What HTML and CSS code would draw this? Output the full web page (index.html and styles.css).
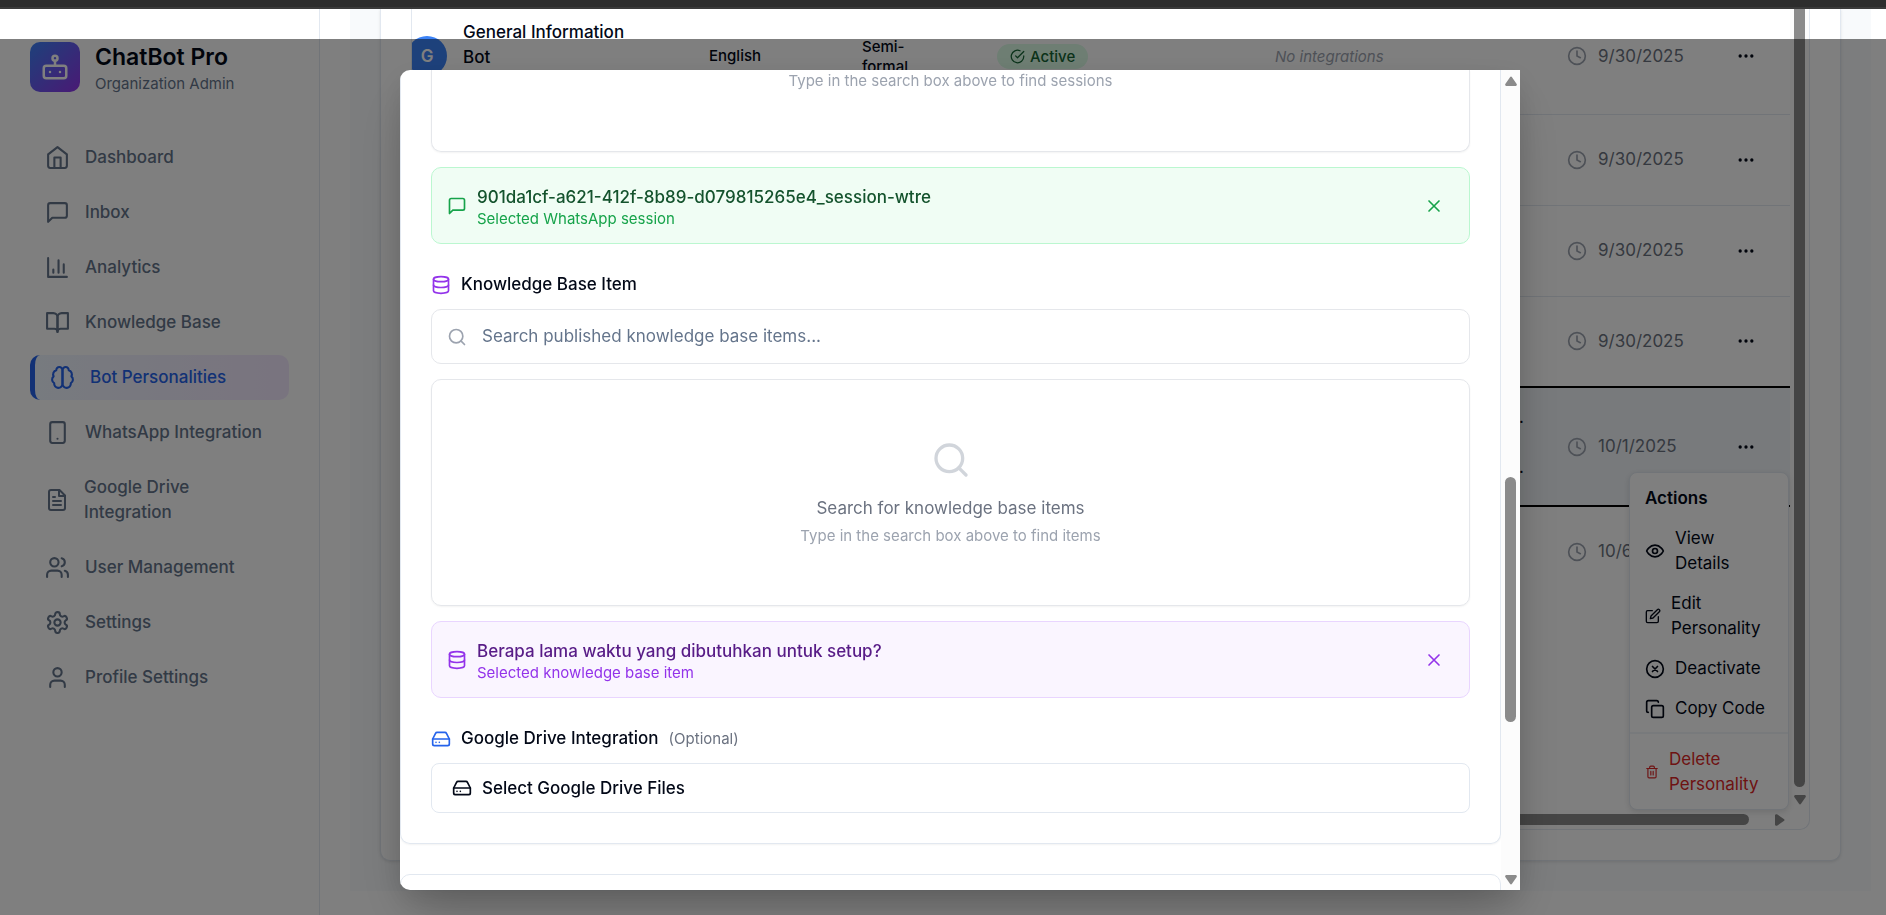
FILE: index.html
```html
<!DOCTYPE html>
<html lang="en">
<head>
<meta charset="utf-8">
<title>ChatBot Pro</title>
<link rel="stylesheet" href="styles.css">
</head>
<body>
<svg class="sprite" aria-hidden="true">
  <symbol id="i-bot" viewBox="0 0 24 24"><rect x="3" y="11" width="18" height="10" rx="2"/><circle cx="12" cy="5" r="2"/><path d="M12 7v4M8 16h.01M16 16h.01"/></symbol>
  <symbol id="i-home" viewBox="0 0 24 24"><path d="m3 9 9-7 9 7v11a2 2 0 0 1-2 2H5a2 2 0 0 1-2-2z"/><path d="M9 22V12h6v10"/></symbol>
  <symbol id="i-msg" viewBox="0 0 24 24"><path d="M21 15a2 2 0 0 1-2 2H7l-4 4V5a2 2 0 0 1 2-2h14a2 2 0 0 1 2 2z"/></symbol>
  <symbol id="i-chart" viewBox="0 0 24 24"><path d="M3 3v18h18M18 17V9M13 17V5M8 17v-3"/></symbol>
  <symbol id="i-book" viewBox="0 0 24 24"><path d="M2 3h6a4 4 0 0 1 4 4v14a3 3 0 0 0-3-3H2z"/><path d="M22 3h-6a4 4 0 0 0-4 4v14a3 3 0 0 1 3-3h7z"/></symbol>
  <symbol id="i-brain" viewBox="0 0 24 24"><path d="M12 5a3 3 0 1 0-5.997.125 4 4 0 0 0-2.526 5.77 4 4 0 0 0 .556 6.588A4 4 0 1 0 12 18Z"/><path d="M12 5a3 3 0 1 1 5.997.125 4 4 0 0 1 2.526 5.77 4 4 0 0 1-.556 6.588A4 4 0 1 1 12 18Z"/></symbol>
  <symbol id="i-phone" viewBox="0 0 24 24"><rect x="5" y="2" width="14" height="20" rx="2"/><path d="M12 18h.01"/></symbol>
  <symbol id="i-file" viewBox="0 0 24 24"><path d="M14.5 2H6a2 2 0 0 0-2 2v16a2 2 0 0 0 2 2h12a2 2 0 0 0 2-2V7.5L14.5 2z"/><path d="M14 2v6h6M16 13H8M16 17H8M10 9H8"/></symbol>
  <symbol id="i-users" viewBox="0 0 24 24"><path d="M16 21v-2a4 4 0 0 0-4-4H6a4 4 0 0 0-4 4v2"/><circle cx="9" cy="7" r="4"/><path d="M22 21v-2a4 4 0 0 0-3-3.87M16 3.13a4 4 0 0 1 0 7.75"/></symbol>
  <symbol id="i-gear" viewBox="0 0 24 24"><path d="M12.22 2h-.44a2 2 0 0 0-2 2v.18a2 2 0 0 1-1 1.73l-.43.25a2 2 0 0 1-2 0l-.15-.08a2 2 0 0 0-2.73.73l-.22.38a2 2 0 0 0 .73 2.73l.15.1a2 2 0 0 1 1 1.72v.51a2 2 0 0 1-1 1.74l-.15.09a2 2 0 0 0-.73 2.73l.22.38a2 2 0 0 0 2.73.73l.15-.08a2 2 0 0 1 2 0l.43.25a2 2 0 0 1 1 1.73V20a2 2 0 0 0 2 2h.44a2 2 0 0 0 2-2v-.18a2 2 0 0 1 1-1.73l.43-.25a2 2 0 0 1 2 0l.15.08a2 2 0 0 0 2.73-.73l.22-.39a2 2 0 0 0-.73-2.73l-.15-.08a2 2 0 0 1-1-1.74v-.5a2 2 0 0 1 1-1.74l.15-.09a2 2 0 0 0 .73-2.73l-.22-.38a2 2 0 0 0-2.73-.73l-.15.08a2 2 0 0 1-2 0l-.43-.25a2 2 0 0 1-1-1.73V4a2 2 0 0 0-2-2z"/><circle cx="12" cy="12" r="3"/></symbol>
  <symbol id="i-user" viewBox="0 0 24 24"><path d="M19 21v-2a4 4 0 0 0-4-4H9a4 4 0 0 0-4 4v2"/><circle cx="12" cy="7" r="4"/></symbol>
  <symbol id="i-check" viewBox="0 0 24 24"><path d="M22 11.08V12a10 10 0 1 1-5.93-9.14"/><path d="m9 11 3 3L22 4"/></symbol>
  <symbol id="i-clock" viewBox="0 0 24 24"><circle cx="12" cy="12" r="10"/><path d="M12 6v6l4 2"/></symbol>
  <symbol id="i-dots" viewBox="0 0 24 24"><circle cx="12" cy="12" r="1"/><circle cx="19" cy="12" r="1"/><circle cx="5" cy="12" r="1"/></symbol>
  <symbol id="i-eye" viewBox="0 0 24 24"><path d="M2 12s3-7 10-7 10 7 10 7-3 7-10 7-10-7-10-7Z"/><circle cx="12" cy="12" r="3"/></symbol>
  <symbol id="i-edit" viewBox="0 0 24 24"><path d="M11 4H4a2 2 0 0 0-2 2v14a2 2 0 0 0 2 2h14a2 2 0 0 0 2-2v-7"/><path d="M18.5 2.5a2.12 2.12 0 0 1 3 3L12 15l-4 1 1-4Z"/></symbol>
  <symbol id="i-xcircle" viewBox="0 0 24 24"><circle cx="12" cy="12" r="10"/><path d="m15 9-6 6M9 9l6 6"/></symbol>
  <symbol id="i-copy" viewBox="0 0 24 24"><rect x="8" y="8" width="14" height="14" rx="2"/><path d="M4 16c-1.1 0-2-.9-2-2V4c0-1.1.9-2 2-2h10c1.1 0 2 .9 2 2"/></symbol>
  <symbol id="i-trash" viewBox="0 0 24 24"><path d="M3 6h18M19 6v14c0 1-1 2-2 2H7c-1 0-2-1-2-2V6M8 6V4c0-1 1-2 2-2h4c1 0 2 1 2 2v2M10 11v6M14 11v6"/></symbol>
  <symbol id="i-db" viewBox="0 0 24 24"><ellipse cx="12" cy="5" rx="9" ry="3"/><path d="M3 5v14a9 3 0 0 0 18 0V5"/><path d="M3 12a9 3 0 0 0 18 0"/></symbol>
  <symbol id="i-search" viewBox="0 0 24 24"><circle cx="11" cy="11" r="8"/><path d="m21 21-4.3-4.3"/></symbol>
  <symbol id="i-x" viewBox="0 0 24 24"><path d="M18 6 6 18M6 6l12 12"/></symbol>
  <symbol id="i-drive" viewBox="0 0 24 24"><path d="M22 12H2"/><path d="M5.45 5.11 2 12v6a2 2 0 0 0 2 2h16a2 2 0 0 0 2-2v-6l-3.45-6.89A2 2 0 0 0 16.76 4H7.24a2 2 0 0 0-1.79 1.11z"/><path d="M6 16h.01M10 16h.01"/></symbol>
  <symbol id="i-arrow" viewBox="0 0 12 10"><path class="solid" d="M5 1.2Q6-.3 7 1.2L11.7 8Q12.3 9.7 10.8 10H1.2Q-.3 9.7.3 8Z"/></symbol>
</svg>

<div class="window-edge"></div>
<div class="app">
  <aside class="sidebar">
    <div class="brand">
      <span class="brand-logo"><svg class="icon icon-30"><use href="#i-bot"/></svg></span>
      <div>
        <h1 class="brand-name">ChatBot Pro</h1>
        <p class="brand-role">Organization Admin</p>
      </div>
    </div>
    <nav class="nav">
      <a class="nav-item" href="#"><svg class="icon icon-25"><use href="#i-home"/></svg>Dashboard</a>
      <a class="nav-item" href="#"><svg class="icon icon-25"><use href="#i-msg"/></svg>Inbox</a>
      <a class="nav-item" href="#"><svg class="icon icon-25"><use href="#i-chart"/></svg>Analytics</a>
      <a class="nav-item" href="#"><svg class="icon icon-25"><use href="#i-book"/></svg>Knowledge Base</a>
      <a class="nav-item active" href="#" aria-current="page"><svg class="icon icon-25"><use href="#i-brain"/></svg>Bot Personalities</a>
      <a class="nav-item" href="#"><svg class="icon icon-25"><use href="#i-phone"/></svg>WhatsApp Integration</a>
      <a class="nav-item" href="#"><svg class="icon icon-24"><use href="#i-file"/></svg>Google Drive Integration</a>
      <a class="nav-item" href="#"><svg class="icon icon-25"><use href="#i-users"/></svg>User Management</a>
      <a class="nav-item" href="#"><svg class="icon icon-25"><use href="#i-gear"/></svg>Settings</a>
      <a class="nav-item" href="#"><svg class="icon icon-25"><use href="#i-user"/></svg>Profile Settings</a>
    </nav>
  </aside>

  <main class="main">
    <section class="card">
      <div class="table-frame">
        <div class="table-view">
          <table class="bots">
            <colgroup><col><col class="c-lang"><col class="c-tone"><col class="c-status"><col class="c-integ"><col class="c-date"><col class="c-act"></colgroup>
            <tbody>
              <tr class="row-first">
                <td><div class="bot"><span class="avatar">G</span><span class="bot-name">General Information Bot</span></div></td>
                <td class="small">English</td>
                <td class="small"><div class="tone">Semi-formal</div></td>
                <td><span class="pill"><svg class="icon icon-15"><use href="#i-check"/></svg>Active</span></td>
                <td class="none">No integrations</td>
                <td><span class="date"><svg class="icon icon-20"><use href="#i-clock"/></svg>9/30/2025</span></td>
                <td class="act"><button class="dots" aria-label="Actions"><svg class="icon icon-20"><use href="#i-dots"/></svg></button></td>
              </tr>
              <tr><td colspan="5"></td><td><span class="date"><svg class="icon icon-20"><use href="#i-clock"/></svg>9/30/2025</span></td><td class="act"><button class="dots" aria-label="Actions"><svg class="icon icon-20"><use href="#i-dots"/></svg></button></td></tr>
              <tr><td colspan="5"></td><td><span class="date"><svg class="icon icon-20"><use href="#i-clock"/></svg>9/30/2025</span></td><td class="act"><button class="dots" aria-label="Actions"><svg class="icon icon-20"><use href="#i-dots"/></svg></button></td></tr>
              <tr class="row-last-plain"><td colspan="5"></td><td><span class="date"><svg class="icon icon-20"><use href="#i-clock"/></svg>9/30/2025</span></td><td class="act"><button class="dots" aria-label="Actions"><svg class="icon icon-20"><use href="#i-dots"/></svg></button></td></tr>
              <tr class="row-selected"><td colspan="5"><div class="tail"><span>.</span><span>.</span></div></td><td><span class="date"><svg class="icon icon-20"><use href="#i-clock"/></svg>10/1/2025</span></td><td class="act"><button class="dots" aria-label="Actions"><svg class="icon icon-20"><use href="#i-dots"/></svg></button></td></tr>
              <tr class="row-end"><td colspan="5"></td><td><span class="date"><svg class="icon icon-20"><use href="#i-clock"/></svg>10/6/2025</span></td><td class="act"></td></tr>
            </tbody>
          </table>
        </div>
        <div class="bar-v"><span class="thumb"></span><svg class="arrow down"><use href="#i-arrow"/></svg></div>
        <div class="bar-h"><span class="thumb"></span><svg class="arrow right"><use href="#i-arrow"/></svg></div>
      </div>
    </section>
    <div class="menu" role="menu">
      <div class="menu-title">Actions</div>
      <button class="menu-item" role="menuitem"><svg class="icon icon-20"><use href="#i-eye"/></svg>View Details</button>
      <button class="menu-item" role="menuitem"><svg class="icon icon-16"><use href="#i-edit"/></svg>Edit Personality</button>
      <button class="menu-item" role="menuitem"><svg class="icon icon-20"><use href="#i-xcircle"/></svg>Deactivate</button>
      <button class="menu-item" role="menuitem"><svg class="icon icon-20"><use href="#i-copy"/></svg>Copy Code</button>
      <hr class="menu-line">
      <button class="menu-item danger" role="menuitem"><svg class="icon icon-14"><use href="#i-trash"/></svg>Delete Personality</button>
    </div>
  </main>
</div>

<div class="overlay">
  <div class="modal" role="dialog" aria-label="Bot integrations">
    <div class="modal-view">
      <section class="panel">
        <div class="results results-cut"><p class="hint">Type in the search box above to find sessions</p></div>
        <div class="picked green">
          <svg class="icon icon-20"><use href="#i-msg"/></svg>
          <div class="picked-text"><p class="picked-name">901da1cf-a621-412f-8b89-d079815265e4_session-wtre</p><p class="picked-note">Selected WhatsApp session</p></div>
          <button class="clear" aria-label="Remove session"><svg class="icon icon-20"><use href="#i-x"/></svg></button>
        </div>
        <label class="field-label purple-icon" for="kb"><svg class="icon icon-20"><use href="#i-db"/></svg>Knowledge Base Item</label>
        <div class="search"><svg class="icon icon-20"><use href="#i-search"/></svg><input id="kb" type="text" placeholder="Search published knowledge base items..."></div>
        <div class="results"><svg class="icon icon-40"><use href="#i-search"/></svg><p class="results-title">Search for knowledge base items</p><p class="hint">Type in the search box above to find items</p></div>
        <div class="picked purple">
          <svg class="icon icon-20"><use href="#i-db"/></svg>
          <div class="picked-text"><p class="picked-name">Berapa lama waktu yang dibutuhkan untuk setup?</p><p class="picked-note">Selected knowledge base item</p></div>
          <button class="clear" aria-label="Remove item"><svg class="icon icon-20"><use href="#i-x"/></svg></button>
        </div>
        <label class="field-label blue-icon" for="drive"><svg class="icon icon-20"><use href="#i-drive"/></svg>Google Drive Integration<span class="optional">(Optional)</span></label>
        <button class="drive" id="drive"><svg class="icon icon-20"><use href="#i-drive"/></svg>Select Google Drive Files</button>
      </section>
      <section class="panel-next"></section>
    </div>
    <div class="bar-modal"><svg class="arrow"><use href="#i-arrow"/></svg><span class="thumb"></span><svg class="arrow down"><use href="#i-arrow"/></svg></div>
  </div>
</div>
</body>
</html>
```

FILE: styles.css
```css
* { box-sizing: border-box; margin: 0; }
:root { --text: 17px; --small: 15px; --ink: #020817; --line: #e2e8f0; }
body {
  display: flex; flex-direction: column; height: 100vh; overflow: hidden;
  font-family: Inter, "Liberation Sans", sans-serif; font-size: var(--text); line-height: 25px;
  color: var(--ink); background: #fff;
}
button, input { font: inherit; color: inherit; background: none; border: 0; padding: 0; }
.sprite { display: none; }
.icon { flex: none; display: block; fill: none; stroke: currentColor; stroke-width: 2; stroke-linecap: round; stroke-linejoin: round; }
.solid { fill: #8b8b8b; stroke: none; }
.icon-14 { width: 14px; height: 14px; }
.icon-15 { width: 15px; height: 15px; }
.icon-16 { width: 16px; height: 16px; }
.icon-20 { width: 20px; height: 20px; }
.icon-24 { width: 24px; height: 24px; }
.icon-25 { width: 25px; height: 25px; }
.icon-30 { width: 30px; height: 30px; }
.icon-40 { width: 40px; height: 40px; color: #d1d5db; }

.window-edge { flex: none; height: 9px; background: #2d2d2d; border-bottom: 2px solid #3b3b3b; }
.app { flex: 1; min-height: 0; display: flex; }

/* Sidebar */
.sidebar { flex: none; width: 320px; padding: 33px 30px 0; border-right: 1px solid var(--line); }
.brand { display: flex; gap: 15px; align-items: flex-start; height: 50px; }
.brand-logo { display: grid; place-items: center; width: 50px; height: 50px; border-radius: 10px; color: #fff; background: linear-gradient(135deg, #3b82f6, #9333ea); }
.brand-name { font-size: 23px; line-height: 30px; font-weight: 600; }
.brand-role { font-size: var(--small); line-height: 24px; color: #64748b; }
.nav { display: flex; flex-direction: column; gap: 10px; margin-top: 43px; }
.nav-item { display: flex; align-items: center; gap: 15px; padding: 10px 15px; border-radius: 10px; color: #64748b; font-weight: 500; text-decoration: none; }
.nav-item.active { color: #2563eb; border-left: 5px solid #2563eb; background: linear-gradient(90deg, #eff6ff, #f3e8ff); }

/* Bots table */
.main { position: relative; flex: 1; min-width: 0; display: flex; padding: 0 15px 24px 30px; background: linear-gradient(#f8fafc, #f8fafc) content-box; }
.card { flex: 1; min-width: 0; display: flex; margin: 0 30px 30px; padding: 0 30px 30px; border: 1px solid var(--line); border-top: 0; border-radius: 0 0 10px 10px; background: #fff; box-shadow: 0 1px 3px rgba(0,0,0,.1); }
.table-frame { flex: 1; min-width: 0; display: grid; grid-template: 1fr 19px / 1fr 19px; border: 1px solid var(--line); border-top: 0; border-radius: 0 0 10px 10px; }
.table-view { min-width: 0; min-height: 0; overflow: hidden; }
.bots { width: 100%; table-layout: fixed; border-collapse: collapse; }
.bots td { height: 91px; padding: 0; vertical-align: middle; border-bottom: 1px solid var(--line); }
.c-lang { width: 153px; } .c-tone { width: 135px; } .c-status { width: 278px; }
.c-integ { width: 292px; } .c-date { width: 135px; } .c-act { width: 88px; }
.bots .row-first td { height: 105px; padding-bottom: 10px; }
.bots .row-last-plain td { border-bottom: 2px solid #000; }
.bots .row-selected td { height: 119px; background: #f1f5f9; border-bottom: 2px solid #000; }
.bots .row-end td { border: 0; height: 90px; }
.bot { display: flex; align-items: center; gap: 16px; margin-left: -5px; }
.avatar { flex: none; display: grid; place-items: center; width: 40px; height: 40px; border-radius: 50%; background: #3b82f6; color: #fff; font-weight: 600; }
.bot-name { width: 180px; margin-bottom: 22px; font-weight: 500; }
.small { font-size: var(--small); line-height: 20px; font-weight: 500; }
.tone { width: 50px; padding-top: 2px; }
.pill { display: inline-flex; align-items: center; gap: 5px; height: 25px; padding: 0 13px; border-radius: 13px; background: #dcfce7; color: #166534; font-size: var(--small); font-weight: 500; vertical-align: middle; }
.none { font-size: var(--small); font-style: italic; color: #9ca3af; }
.date { display: flex; align-items: center; gap: 11px; color: #6b7280; }
.date .icon { color: #9ca3af; }
.dots { display: block; margin: 0 auto; }
.tail { display: flex; flex-direction: column; width: 1112px; text-align: right; line-height: 50px; padding-bottom: 10px; }
.bar-v { display: flex; flex-direction: column; align-items: center; background: #fcfcfc; }
.thumb { display: block; background: #8b8b8b; }
.arrow { width: 12px; height: 10px; display: block; flex: none; }
.down { transform: rotate(180deg); }
.right { transform: rotate(90deg); }
.bar-v .thumb { flex: 1; width: 11px; margin-bottom: 8px; border-radius: 0 0 6px 6px; }
.bar-v .down { margin-bottom: 5px; }
.bar-h { display: flex; align-items: center; background: #fcfcfc; }
.bar-h .thumb { flex: 1; height: 11px; margin-right: 25px; border-radius: 0 6px 6px 0; }
.bar-h .right { margin-right: 4px; }

/* Row menu */
.menu { position: absolute; top: 463px; right: 97px; width: 160px; padding: 5px; border: 1px solid var(--line); border-radius: 8px; background: #fff; box-shadow: 0 2px 6px rgba(0,0,0,.12); }
.menu-title { padding: 8px 10px 7px; font-weight: 600; }
.menu-item { display: flex; align-items: center; gap: 10px; width: 100%; padding: 8px 10px 7px; text-align: left; }
.menu-line { height: 2px; margin: 4px -5px 5px; border: 0; background: #f1f5f9; }
.danger { color: #dc2626; }

/* Modal */
.overlay { position: fixed; inset: 39px 0 0; display: flex; justify-content: center; padding: 31px 0 25px 34px; background: rgba(0,0,0,.5); }
.modal { display: flex; width: 1120px; max-width: 100%; border-radius: 10px 0 0 10px; overflow: hidden; background: #fff; box-shadow: 0 25px 50px -12px rgba(0,0,0,.25), 0 10px 30px rgba(0,0,0,.1); }
.modal-view { flex: 1; min-width: 0; overflow: hidden; }
.panel { display: flex; flex-direction: column; padding: 0 30px 30px; border: 1px solid var(--line); border-top: 0; border-radius: 0 0 10px 10px; box-shadow: 0 1px 2px rgba(0,0,0,.05); }
.panel-next { height: 40px; margin-top: 30px; border: 1px solid var(--line); border-radius: 10px; }
.results { display: flex; flex-direction: column; align-items: center; height: 227px; padding-top: 60px; border: 1px solid #e5e7eb; border-radius: 10px; box-shadow: 0 1px 2px rgba(0,0,0,.05); }
.results-cut { height: 82px; padding-top: 0; border-top: 0; border-radius: 0 0 10px 10px; }
.results-title { margin: 16px 0 4px; color: #6b7280; }
.hint { font-size: var(--small); line-height: 22px; color: #9ca3af; }
.picked { display: flex; align-items: center; gap: 10px; height: 77px; margin-top: 15px; padding: 0 25px 0 15px; border: 1px solid; border-radius: 10px; }
.picked-text { flex: 1; }
.picked-name { padding-top: 2px; font-weight: 500; line-height: 24px; }
.picked-note { font-size: var(--small); line-height: 20px; }
.green { color: #16a34a; background: #f0fdf4; border-color: #bbf7d0; }
.green .picked-name { color: #14532d; }
.purple { color: #9333ea; background: #faf5ff; border-color: #e9d5ff; }
.purple .picked-name { color: #581c87; }
.field-label { display: flex; align-items: center; gap: 10px; margin: 28px 0 12px; font-weight: 500; }
.purple-icon .icon { color: #9333ea; }
.blue-icon .icon { color: #2563eb; }
.optional { font-size: var(--small); font-weight: 400; color: #6b7280; }
.search { display: flex; align-items: center; gap: 15px; height: 55px; margin-bottom: 15px; padding: 0 15px; border: 1px solid #e5e7eb; border-radius: 10px; color: #9ca3af; }
.search input { flex: 1; outline: 0; color: var(--ink); }
.search input::placeholder { color: #64748b; opacity: 1; }
.drive { display: flex; align-items: center; gap: 10px; height: 50px; padding: 0 20px; border: 1px solid var(--line); border-radius: 8px; font-weight: 500; }
.bar-modal { flex: none; width: 19px; display: flex; flex-direction: column; align-items: center; padding: 6px 0 5px; background: #fcfcfc; }
.bar-modal .thumb { width: 11px; height: 245px; margin: 391px 0 auto; border-radius: 6px; }
```
